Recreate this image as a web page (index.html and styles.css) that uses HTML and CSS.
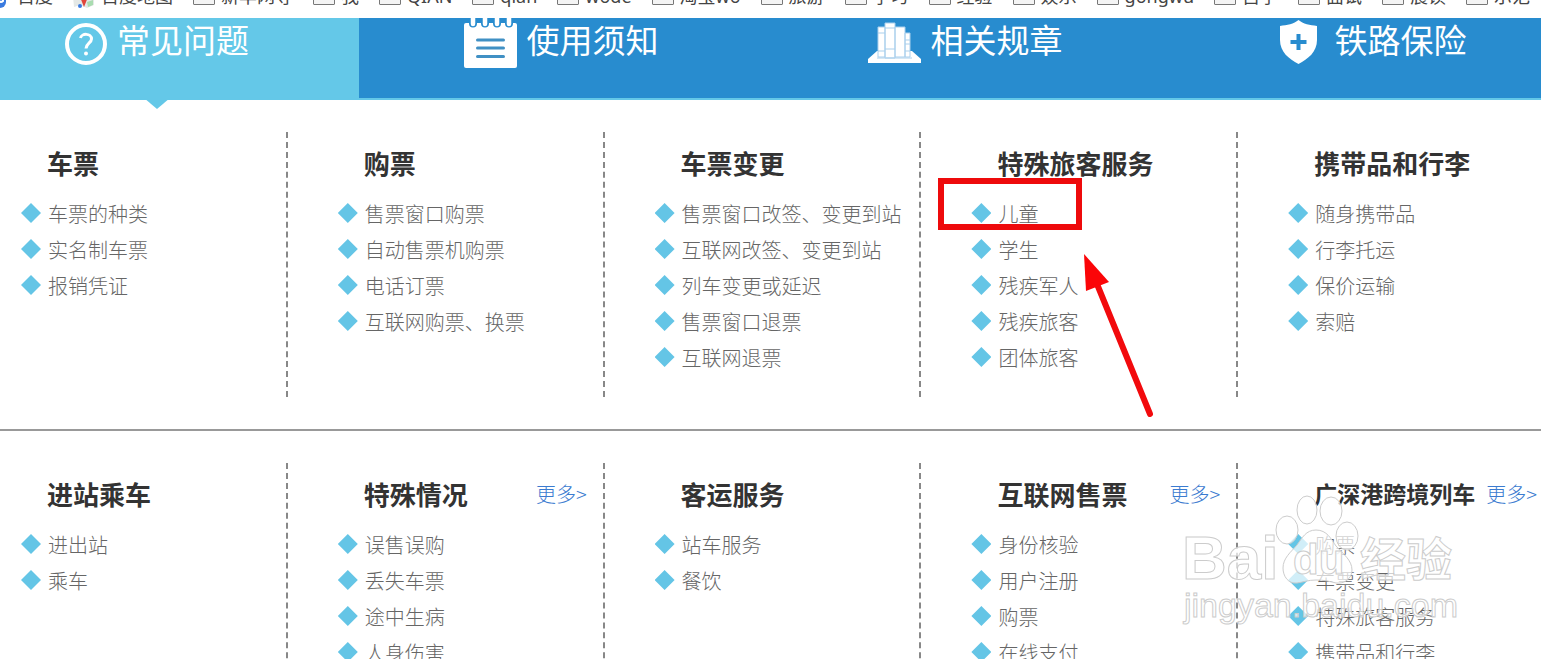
FILE: index.html
```html
<!DOCTYPE html>
<html lang="zh-CN">
<head>
<meta charset="UTF-8">
<meta name="viewport" content="width=device-width, initial-scale=1.0">
<title>常见问题</title>
<link rel="stylesheet" href="styles.css">
</head>
<body>
    <div class="bookmarks">
        <a href="#"><svg class="site" viewBox="0 0 22 20"><rect x="0" y="0" width="17" height="20" rx="6" fill="#3a7be0"/><path d="M10 6v7a3 3 0 0 0 4 0V6" fill="none" stroke="#fff" stroke-width="2"/></svg>百度</a>
        <a href="#"><svg class="site" viewBox="0 0 22 20"><path d="M0 8l8-4 6 4 7-4v13l-7 3-7-3-6 2z" fill="#e4e8e6"/><path d="M14 14l6-2v5l-5 2z" fill="#a9dcb0"/><path d="M11 19L7 9h8z" fill="#e0463c"/><circle cx="7" cy="18" r="2" fill="#3a7be0"/></svg>百度地图</a>
        <a href="#"><i class="folder"></i>新华网导</a>
        <a href="#"><i class="folder"></i>我</a>
        <a href="#"><i class="folder"></i>QIAN</a>
        <a href="#"><i class="folder"></i>qian</a>
        <a href="#"><i class="folder"></i>wode</a>
        <a href="#"><i class="folder"></i>淘宝wo</a>
        <a href="#"><i class="folder"></i>旅游</a>
        <a href="#"><i class="folder"></i>学习</a>
        <a href="#"><i class="folder"></i>经验</a>
        <a href="#"><i class="folder"></i>娱乐</a>
        <a href="#"><i class="folder"></i>gongwu</a>
        <a href="#"><i class="folder"></i>自学</a>
        <a href="#"><i class="folder"></i>面试</a>
        <a href="#"><i class="folder"></i>晨读</a>
        <a href="#"><i class="folder"></i>示范</a>
    </div>

    <nav class="tabs">
        <a href="#" class="tab active">
            <svg width="42" height="50" viewBox="0 0 42 50"><circle cx="21" cy="26" r="19" fill="none" stroke="#fff" stroke-width="4"/><path d="M15.500 20c1-5 11-5 11 1 0 4-5.500 4.500-5.500 9.500" fill="none" stroke="#fff" stroke-width="3"/><circle cx="21" cy="35.500" r="2" fill="#fff"/></svg>
            <span>常见问题</span>
        </a>
        <a href="#" class="tab">
            <svg width="53" height="50" viewBox="0 0 53 50"><rect x="0" y="5" width="53" height="45" rx="2" fill="#fff"/><path d="M9 0v5.500M21 0v5.500M33 0v5.500M45 0v5.500" stroke="#288ccf" stroke-width="8" stroke-linecap="round"/><path d="M9 0v6M21 0v6M33 0v6M45 0v6" stroke="#fff" stroke-width="4.500" stroke-linecap="round"/><path d="M13.500 22h26M13.500 30h26M13.500 38.500h26" stroke="#4090c4" stroke-width="3" stroke-linecap="round"/></svg>
            <span>使用须知</span>
        </a>
        <a href="#" class="tab">
            <svg width="53" height="50" viewBox="0 0 53 50"><path d="M0 45v-4l9-8h35l9 8v4z" fill="#fff"/><g fill="#fff" stroke="#a9cfec" stroke-width="1"><path d="M10 9h7v30h-7zM17 5h10v35H17zM27 9h10v30H27zM37 15h5v24h-5z"/><path d="M10 15h7M10 33h7M17 10h10M17 31h10M37 22h5M37 26h5M37 33h5M9 40h35" fill="none"/></g></svg>
            <span>相关规章</span>
        </a>
        <a href="#" class="tab">
            <svg width="53" height="50" viewBox="0 0 53 50"><path d="M26.500 2C22 6 15 7 8 8v14c0 12 9 19 18.500 24C36 41 45 34 45 22V8C38 7 31 6 26.500 2z" fill="#fff"/><path d="M26.500 16v16M18.500 24h16" stroke="#288ccf" stroke-width="4"/></svg>
            <span>铁路保险</span>
        </a>
    </nav>

    <main>
        <section class="row">
            <div class="col">
                <div class="head"><h2>车票</h2></div>
                <ul>
                    <li><a href="#">车票的种类</a></li>
                    <li><a href="#">实名制车票</a></li>
                    <li><a href="#">报销凭证</a></li>
                </ul>
            </div>
            <div class="col">
                <div class="head"><h2>购票</h2></div>
                <ul>
                    <li><a href="#">售票窗口购票</a></li>
                    <li><a href="#">自动售票机购票</a></li>
                    <li><a href="#">电话订票</a></li>
                    <li><a href="#">互联网购票、换票</a></li>
                </ul>
            </div>
            <div class="col">
                <div class="head"><h2>车票变更</h2></div>
                <ul>
                    <li><a href="#">售票窗口改签、变更到站</a></li>
                    <li><a href="#">互联网改签、变更到站</a></li>
                    <li><a href="#">列车变更或延迟</a></li>
                    <li><a href="#">售票窗口退票</a></li>
                    <li><a href="#">互联网退票</a></li>
                </ul>
            </div>
            <div class="col">
                <div class="head"><h2>特殊旅客服务</h2></div>
                <ul>
                    <li><a href="#">儿童</a></li>
                    <li><a href="#">学生</a></li>
                    <li><a href="#">残疾军人</a></li>
                    <li><a href="#">残疾旅客</a></li>
                    <li><a href="#">团体旅客</a></li>
                </ul>
                <div class="mark-box"></div>
                <svg class="mark-arrow" width="72" height="168" viewBox="0 0 72 168"><path d="M13 30L66 160" stroke="#f20a0d" stroke-width="6" stroke-linecap="round"/><path d="M0 0L25 28 2 37z" fill="#fb0508"/></svg>
            </div>
            <div class="col">
                <div class="head"><h2>携带品和行李</h2></div>
                <ul>
                    <li><a href="#">随身携带品</a></li>
                    <li><a href="#">行李托运</a></li>
                    <li><a href="#">保价运输</a></li>
                    <li><a href="#">索赔</a></li>
                </ul>
            </div>
        </section>

        <section class="row">
            <div class="col">
                <div class="head"><h2>进站乘车</h2></div>
                <ul>
                    <li><a href="#">进出站</a></li>
                    <li><a href="#">乘车</a></li>
                </ul>
            </div>
            <div class="col">
                <div class="head"><h2>特殊情况</h2><a href="#" class="more">更多&gt;</a></div>
                <ul>
                    <li><a href="#">误售误购</a></li>
                    <li><a href="#">丢失车票</a></li>
                    <li><a href="#">途中生病</a></li>
                    <li><a href="#">人身伤害</a></li>
                </ul>
            </div>
            <div class="col">
                <div class="head"><h2>客运服务</h2></div>
                <ul>
                    <li><a href="#">站车服务</a></li>
                    <li><a href="#">餐饮</a></li>
                </ul>
            </div>
            <div class="col">
                <div class="head"><h2>互联网售票</h2><a href="#" class="more">更多&gt;</a></div>
                <ul>
                    <li><a href="#">身份核验</a></li>
                    <li><a href="#">用户注册</a></li>
                    <li><a href="#">购票</a></li>
                    <li><a href="#">在线支付</a></li>
                </ul>
            </div>
            <div class="col">
                <div class="head"><h2 class="long">广深港跨境列车</h2><a href="#" class="more">更多&gt;</a></div>
                <ul>
                    <li><a href="#">购票</a></li>
                    <li><a href="#">车票变更</a></li>
                    <li><a href="#">特殊旅客服务</a></li>
                    <li><a href="#">携带品和行李</a></li>
                </ul>
            </div>
        </section>
    </main>

    <svg class="watermark" width="290" height="146" viewBox="0 0 290 146">
        <g class="wm-shape">
            <ellipse cx="116" cy="42" rx="11" ry="14"/>
            <ellipse cx="136" cy="22" rx="10" ry="14"/>
            <ellipse cx="160" cy="23" rx="11" ry="14"/>
            <ellipse cx="176" cy="48" rx="11" ry="14"/>
            <path d="M145 42c11 0 15 9 20 16 7 8 16 14 16 24 0 9-8 14-16 13-8-2-12-3-20-3s-12 2-19 3c-9 1-14-7-14-15 0-10 8-16 14-23 5-7 9-15 19-15z"/>
        </g>
        <text class="wm-big" x="11" y="91">Bai</text>
        <text class="wm-du" x="122" y="86">du</text>
        <text class="wm-cn" x="189" y="88">经验</text>
        <text class="wm-url" x="13" y="129">jingyan.baidu.com</text>
    </svg>
</body>
</html>
```
FILE: styles.css
```css
* {
    box-sizing: border-box;
}

body {
    margin: 0;
    height: 100vh;
    overflow: hidden;
    position: relative;
    background-color: #fff;
    font-family: "Noto Sans CJK SC", sans-serif;
    color: #333;
}

a {
    color: inherit;
    text-decoration: none;
}

/* bookmark bar, only its lower edge shows */
.bookmarks {
    display: flex;
    align-items: flex-end;
    gap: 20px;
    height: 18px;
    margin-left: -11px;
    padding-bottom: 12px;
    overflow: hidden;
    white-space: nowrap;
    font-family: "Noto Sans", "Noto Sans CJK SC", sans-serif;
    font-size: 18px;
    line-height: 20px;
    color: #444;
}

.bookmarks a {
    display: flex;
    flex: none;
    align-items: flex-end;
    gap: 6px;
}

.site {
    width: 22px;
    height: 20px;
    margin-bottom: -2px;
}

.folder {
    width: 22px;
    height: 18px;
    margin-bottom: 1px;
    border: 1px solid #777;
    border-radius: 1px;
    background-color: #f4f4f4;
}

/* blue tabs */
.tabs {
    display: flex;
    height: 82px;
    margin: 0 -30px 0 -45px;
    background-color: #288ccf;
    border-bottom: 2px solid #64c8e8;
}

.tab {
    position: relative;
    flex: 1;
    display: flex;
    justify-content: center;
    gap: 10px;
    color: #fff;
    font-size: 33px;
    line-height: 42px;
}

.tab.active {
    background-color: #64c8e8;
}

.tab.active::after {
    content: "";
    position: absolute;
    left: 50%;
    top: 100%;
    margin-left: -13px;
    border: 13px solid transparent;
    border-top: 11px solid #64c8e8;
    border-bottom: 0;
}

/* question columns */
.row {
    display: grid;
    grid-template-columns: repeat(5, 1fr);
    margin: 0 -14px 0 -29px;
    padding: 32px 0;
    border-bottom: 2px solid #999;
}

.col {
    position: relative;
    min-height: 265px;
    padding: 10px 0 0 50px;
    border-right: 2px dashed #888;
}

.head {
    display: flex;
    justify-content: space-between;
    align-items: center;
    height: 40px;
    margin-bottom: 13px;
    padding: 0 16px 0 26px;
    white-space: nowrap;
}

h2 {
    margin: 0;
    font-size: 26px;
    font-weight: bold;
}

h2.long {
    font-size: 23px;
}

.more {
    font-size: 20px;
    font-weight: 300;
    color: #3b7bd0;
}

ul {
    margin: 0;
    padding: 0;
    list-style: none;
}

li {
    display: flex;
    align-items: center;
    gap: 7px;
    height: 36px;
    font-size: 20px;
    font-weight: 300;
    color: #666;
    white-space: nowrap;
}

li::before {
    content: "";
    width: 20px;
    height: 20px;
    background-color: #64c5e6;
    clip-path: polygon(50% 0, 100% 50%, 50% 100%, 0 50%);
}

/* red marks over the list */
.mark-box {
    position: absolute;
    left: 17px;
    top: 46px;
    width: 144px;
    height: 52px;
    border: 6px solid #ee0a0c;
}

.mark-arrow {
    position: absolute;
    left: 163px;
    top: 122px;
}

.watermark {
    position: absolute;
    right: 80px;
    top: 488px;
    fill: rgba(255, 255, 255, 0.7);
    stroke: #ccc;
    stroke-width: 1px;
    font-family: "Liberation Sans", "Noto Sans CJK SC", sans-serif;
}

.wm-big {
    font-size: 62px;
    font-weight: bold;
}

.wm-du {
    font-size: 42px;
    font-weight: bold;
}

.wm-cn {
    font-size: 46px;
    font-weight: bold;
}

.wm-url {
    font-size: 34px;
}
```
